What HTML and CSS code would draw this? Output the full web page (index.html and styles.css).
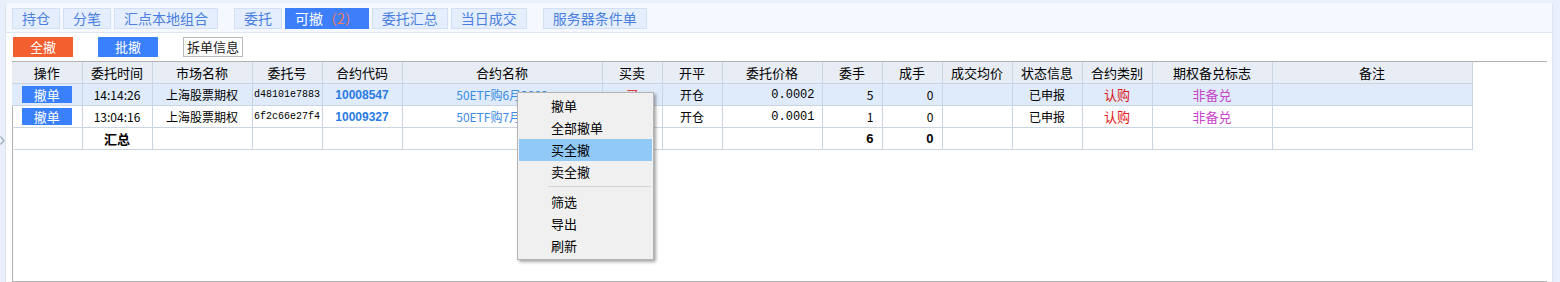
FILE: index.html
```html
<!DOCTYPE html>
<html>
<head>
    <title>可撤委托</title>
    <link rel="stylesheet" href="styles.css">
</head>
<body>
    <div class="side-arrow">
        <svg width="5" height="9" viewBox="0 0 5 9"><path d="M0.5 0.5 L4 4.5 L0.5 8.5" fill="none" stroke="#9aa6b8" stroke-width="1.2"/></svg>
    </div>
    <div class="panel">
        <div class="tabbar">
            <span class="tab">持仓</span>
            <span class="tab">分笔</span>
            <span class="tab">汇点本地组合</span>
            <span class="tab group">委托</span>
            <span class="tab active">可撤<em>（2）</em></span>
            <span class="tab">委托汇总</span>
            <span class="tab">当日成交</span>
            <span class="tab group">服务器条件单</span>
        </div>

        <div class="actions">
            <button class="btn btn-red">全撤</button>
            <button class="btn btn-blue">批撤</button>
            <button class="btn btn-plain">拆单信息</button>
        </div>

        <div class="grid">
            <table>
                <colgroup>
                    <col style="width:70px"><col style="width:70px"><col style="width:100px"><col style="width:70px">
                    <col style="width:80px"><col style="width:200px"><col style="width:60px"><col style="width:60px">
                    <col style="width:100px"><col style="width:60px"><col style="width:60px"><col style="width:70px">
                    <col style="width:70px"><col style="width:70px"><col style="width:120px"><col style="width:200px">
                </colgroup>
                <tr class="head">
                    <th>操作</th><th>委托时间</th><th>市场名称</th><th>委托号</th><th>合约代码</th><th>合约名称</th>
                    <th>买卖</th><th>开平</th><th>委托价格</th><th>委手</th><th>成手</th><th>成交均价</th>
                    <th>状态信息</th><th>合约类别</th><th>期权备兑标志</th><th>备注</th>
                </tr>
                <tr class="selected">
                    <td><span class="cancel">撤单</span></td>
                    <td class="time">14:14:26</td>
                    <td>上海股票期权</td>
                    <td class="mono">d48101e7883</td>
                    <td class="code">10008547</td>
                    <td class="name">50ETF购6月3000</td>
                    <td class="buy">买</td>
                    <td>开仓</td>
                    <td class="price">0.0002</td>
                    <td class="num">5</td>
                    <td class="num">0</td>
                    <td></td>
                    <td>已申报</td>
                    <td class="call">认购</td>
                    <td class="flag">非备兑</td>
                    <td></td>
                </tr>
                <tr>
                    <td><span class="cancel">撤单</span></td>
                    <td class="time">13:04:16</td>
                    <td>上海股票期权</td>
                    <td class="mono">6f2c66e27f4</td>
                    <td class="code">10009327</td>
                    <td class="name">50ETF购7月3000</td>
                    <td class="buy">买</td>
                    <td>开仓</td>
                    <td class="price">0.0001</td>
                    <td class="num">1</td>
                    <td class="num">0</td>
                    <td></td>
                    <td>已申报</td>
                    <td class="call">认购</td>
                    <td class="flag">非备兑</td>
                    <td></td>
                </tr>
                <tr class="total">
                    <td></td><td>汇总</td><td></td><td></td><td></td><td></td><td></td><td></td><td></td>
                    <td class="num">6</td><td class="num">0</td><td></td><td></td><td></td><td></td><td></td>
                </tr>
            </table>
        </div>
    </div>

    <ul class="menu">
        <li>撤单</li>
        <li>全部撤单</li>
        <li class="hover">买全撤</li>
        <li>卖全撤</li>
        <li class="sep"></li>
        <li>筛选</li>
        <li>导出</li>
        <li>刷新</li>
    </ul>
</body>
</html>
```

FILE: styles.css
```css
body {
    margin: 0;
    background-color: #e9f0fc;
    font-family: "Noto Sans CJK SC", "Liberation Sans", sans-serif;
    font-size: 12px;
    color: #000000;
    height: 282px;
    overflow: hidden;
}

.side-arrow {
    position: absolute;
    left: 0;
    top: 136px;
    line-height: 0;
}

.panel {
    margin: 3px 0 0 5px;
    width: 1546px;
    height: 279px;
    background-color: #ffffff;
    border-left: 1px solid #dfe5ee;
    border-right: 1px solid #dfe5ee;
}

.tabbar {
    display: flex;
    gap: 3px;
    padding: 5px 0 0 6px;
    box-sizing: border-box;
    height: 30px;
    background-color: #f5f9ff;
    border-bottom: 1px solid #dde6f2;
}

.tab {
    height: 19px;
    line-height: 19px;
    padding: 0 9px;
    background-color: #e5eefc;
    border: 1px solid #d3dff4;
    color: #4a7fe0;
    font-size: 14px;
}

.tab.group {
    margin-left: 13px;
}

.tab.active {
    background-color: #3d7ffb;
    border-color: #3d7ffb;
    color: #ffffff;
}

.tab.active em {
    font-style: normal;
    color: #f07a5a;
}

.actions {
    display: flex;
    gap: 25px;
    padding: 4px 0 0 7px;
    height: 20px;
}

.btn {
    width: 60px;
    height: 20px;
    padding: 0;
    border: none;
    font-family: "Noto Sans CJK SC", sans-serif;
    font-size: 13px;
    line-height: 20px;
    color: #ffffff;
}

.btn-red {
    background-color: #f45f30;
}

.btn-blue {
    background-color: #3a7ffb;
}

.btn-plain {
    background-color: #ffffff;
    border: 1px solid #b9b9b9;
    color: #222222;
    line-height: 18px;
}

.grid {
    margin: 4px 0 0 6px;
    width: 1534px;
    height: 219px;
    border-top: 1px solid #b3b3b3;
    border-left: 1px solid #b3b3b3;
    border-bottom: 2px solid #b3b3b3;
}

table {
    border-collapse: collapse;
    table-layout: fixed;
    width: 1460px;
    margin-left: -1px;
}

th, td {
    height: 21px;
    padding: 0 4px;
    border: 1px solid #c9d5e3;
    text-align: center;
    white-space: nowrap;
    overflow: hidden;
    font-weight: normal;
    font-size: 12px;
}

tr > :first-child {
    border-left: none;
}

.head th {
    border-top: none;
    background-color: #e8edf5;
    font-size: 13px;
}

.selected td {
    background-color: #dfebfb;
}

.cancel {
    display: inline-block;
    width: 50px;
    height: 17px;
    line-height: 17px;
    background-color: #3a7ffb;
    color: #ffffff;
    font-size: 13px;
}

.time {
    font-size: 12px;
}

.mono {
    font-family: "Liberation Mono", monospace;
    font-size: 10px;
    padding: 0;
}

.code {
    font-family: "Liberation Sans", sans-serif;
    font-weight: bold;
    color: #2a7be3;
}

.name {
    color: #3a8be3;
}

.buy {
    color: #e01515;
}

.price {
    font-family: "Liberation Mono", monospace;
    text-align: right;
    padding-right: 7px;
}

.num {
    text-align: right;
    padding-right: 8px;
}

.call {
    color: #e01515;
    font-size: 13px;
}

.flag {
    color: #c745c7;
    font-size: 13px;
}

.total td {
    font-weight: bold;
    font-size: 13px;
}

.total .num {
    font-family: "Liberation Sans", sans-serif;
}

.menu {
    position: absolute;
    left: 517px;
    top: 92px;
    width: 135px;
    margin: 0;
    padding: 2px 0;
    list-style: none;
    background-color: #f0f0f0;
    border: 1px solid #b4b4b4;
    box-shadow: 2px 2px 3px rgba(0, 0, 0, 0.35);
    font-size: 13px;
}

.menu li {
    height: 22px;
    line-height: 22px;
    margin: 0 1px;
    padding-left: 32px;
}

.menu li.hover {
    background-color: #91c9f7;
}

.menu li.sep {
    height: 8px;
    margin: 0 2px 0 30px;
    padding: 0;
    background: linear-gradient(#f0f0f0 3px, #d4d4d4 3px, #d4d4d4 4px, #f0f0f0 4px);
}
```
